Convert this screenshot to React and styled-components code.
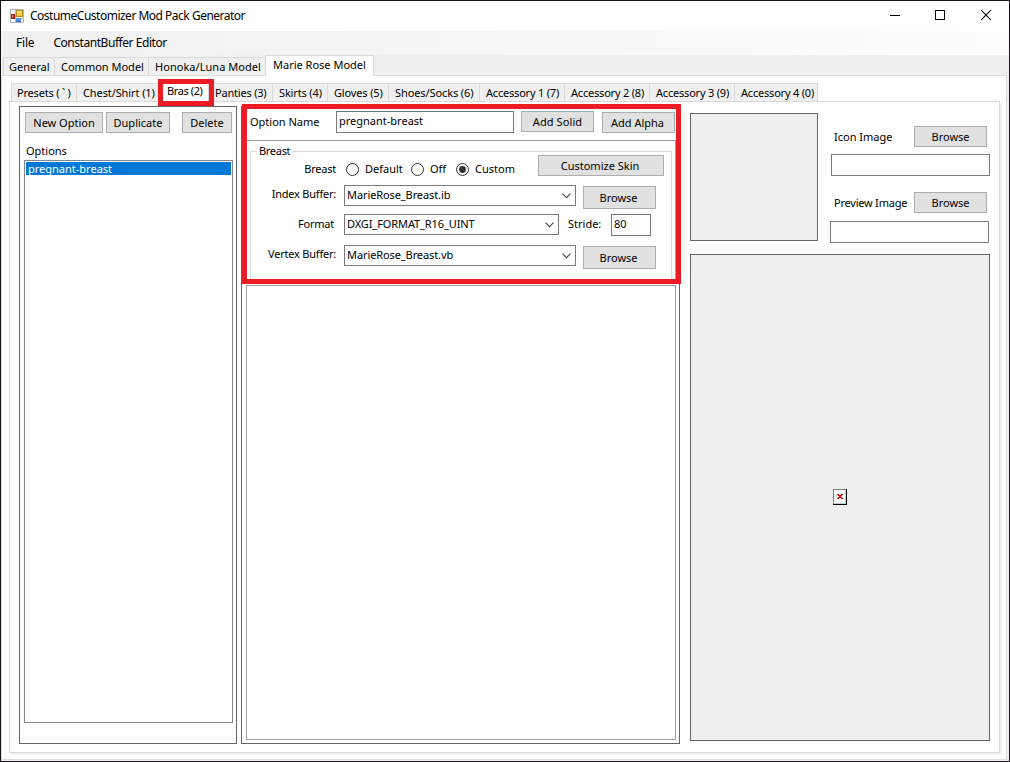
import { useState } from "react";
import styled, { createGlobalStyle, css } from "styled-components";

const outerTabs = [
  { title: "General", width: 51 },
  { title: "Common Model", width: 94 },
  { title: "Honoka/Luna Model", width: 118, spacing: "0.04px" },
  { title: "Marie Rose Model", width: 109, selected: true },
];

const innerTabs = [
  { title: "Presets ( ` )", width: 65, spacing: "-0.2px" },
  { title: "Chest/Shirt (1)", width: 84, spacing: "-0.1px" },
  { title: "Bras (2)", width: 48, spacing: "-0.4px", selected: true },
  { title: "Panties (3)", width: 64, spacing: "-0.2px" },
  { title: "Skirts (4)", width: 55, spacing: "-0.15px" },
  { title: "Gloves (5)", width: 61, spacing: "-0.15px" },
  { title: "Shoes/Socks (6)", width: 91, spacing: "-0.1px" },
  { title: "Accessory 1 (7)", width: 85, spacing: "-0.2px" },
  { title: "Accessory 2 (8)", width: 85, spacing: "-0.2px" },
  { title: "Accessory 3 (9)", width: 85, spacing: "-0.2px" },
  { title: "Accessory 4 (0)", width: 84, spacing: "-0.2px" },
];

const ComboBox = ({ width, value }) => (
  <ComboStyle $width={width}>
    <ComboText>{value}</ComboText>
    <svg width="9" height="6" viewBox="0 0 9 6">
      <path d="M0.5 0.7 L4.5 4.7 L8.5 0.7" fill="none" stroke="#444" strokeWidth="1.1" />
    </svg>
  </ComboStyle>
);

const RadioButton = ({ title, width, checked, onChange }) => (
  <RadioStyle $width={width} onClick={onChange}>
    <svg width="13" height="13" viewBox="0 0 13 13">
      <circle cx="6.5" cy="6.5" r="6" fill="#fff" stroke="#333" />
      {checked && <circle cx="6.5" cy="6.5" r="3.4" fill="#333" />}
    </svg>
    {title}
  </RadioStyle>
);

const AppIcon = () => (
  <svg width="14" height="14" viewBox="0 0 14 14" shapeRendering="crispEdges">
    <rect x="0.5" y="0.5" width="13" height="13" fill="#fff" stroke="#b4b8bc" />
    <path d="M5.5 0V14 M0 9.5H14" stroke="#b4b8bc" />
    <rect x="1" y="5" width="4" height="5" fill="#c33" />
    <rect x="1.5" y="5.5" width="3" height="4" fill="none" stroke="#a31c1c" />
    <rect x="2" y="6" width="1" height="2" fill="#ef8d80" />
    <rect x="6.5" y="1.5" width="6" height="6" fill="#fbc935" stroke="#b98a1c" />
    <rect x="7" y="2" width="4" height="2" fill="#fde48d" />
    <rect x="6" y="9" width="5" height="4" fill="#5795e8" />
    <rect x="6" y="12" width="5" height="1" fill="#2f67bd" />
  </svg>
);

export default function App() {
  const [skin, setSkin] = useState("Custom");

  return (
    <Window>
      <GlobalStyle />
      <TitleBar>
        <AppIcon />
        <WindowTitle>CostumeCustomizer Mod Pack Generator</WindowTitle>
        <svg width="102" height="12" viewBox="0 0 102 12">
          <path d="M0 5.5H10" stroke="#000" shapeRendering="crispEdges" />
          <rect x="45.5" y="0.5" width="9" height="9" fill="none" stroke="#000" shapeRendering="crispEdges" />
          <path d="M91.2 0.2L100.8 9.8M100.8 0.2L91.2 9.8" stroke="#000" strokeWidth="1.1" />
        </svg>
      </TitleBar>
      <MenuBar>
        <FileMenu>File</FileMenu>
        <span>ConstantBuffer Editor</span>
      </MenuBar>

      <OuterStrip>
        {outerTabs.map((tab) => (
          <OuterTab
            key={tab.title}
            $width={tab.width}
            $spacing={tab.spacing}
            $selected={tab.selected}
          >
            {tab.title}
          </OuterTab>
        ))}
      </OuterStrip>
      <OuterPage>
        <InnerStrip>
          {innerTabs.map((tab) => (
            <InnerTab
              key={tab.title}
              $width={tab.width}
              $spacing={tab.spacing}
              $selected={tab.selected}
            >
              {tab.title}
              {tab.selected && <TabHighlight />}
            </InnerTab>
          ))}
        </InnerStrip>
        <InnerPage>
          <OptionsPanel>
            <OptionButtons>
              <Button $width={78}>New Option</Button>
              <Button $width={64}>Duplicate</Button>
              <DeleteButton $width={50}>Delete</DeleteButton>
            </OptionButtons>
            <OptionsTitle>Options</OptionsTitle>
            <OptionsList>
              <OptionItem>pregnant-breast</OptionItem>
            </OptionsList>
          </OptionsPanel>

          <EditorPanel>
            <EditorHeader>
              <NameLabel>Option Name</NameLabel>
              <NameBox $width={178}>pregnant-breast</NameBox>
              <SolidButton $width={73}>Add Solid</SolidButton>
              <AlphaButton $width={73}>Add Alpha</AlphaButton>
            </EditorHeader>
            <TopPane>
              <GroupBox>
                <Legend>Breast</Legend>
                <FormRow $height={30}>
                  <RadioLabel>Breast</RadioLabel>
                  <RadioGroup>
                    {[["Default", 65], ["Off", 45], ["Custom", 82]].map(([title, width]) => (
                      <RadioButton
                        key={title}
                        title={title}
                        width={width}
                        checked={skin === title}
                        onChange={() => setSkin(title)}
                      />
                    ))}
                  </RadioGroup>
                  <SkinButton $width={126}>Customize Skin</SkinButton>
                </FormRow>
                <FormRow $height={29}>
                  <FieldLabel>Index Buffer:</FieldLabel>
                  <ComboBox width={232} value="MarieRose_Breast.ib" />
                  <FileButton $width={73}>Browse</FileButton>
                </FormRow>
                <FormRow $height={31}>
                  <FormatLabel>Format</FormatLabel>
                  <ComboBox width={215} value="DXGI_FORMAT_R16_UINT" />
                  <StrideLabel>Stride:</StrideLabel>
                  <NameBox $width={40}>80</NameBox>
                </FormRow>
                <FormRow $height={29}>
                  <FieldLabel>Vertex Buffer:</FieldLabel>
                  <ComboBox width={232} value="MarieRose_Breast.vb" />
                  <FileButton $width={73}>Browse</FileButton>
                </FormRow>
              </GroupBox>
            </TopPane>
            <BottomPane />
            <EditorHighlight />
          </EditorPanel>

          <ImagesPanel>
            <ImagesTop>
              <IconBox />
              <ImageFields>
                <ImageRow>
                  <span>Icon Image</span>
                  <Button $width={73}>Browse</Button>
                </ImageRow>
                <IconPath $width={159} />
                <ImageRow>
                  <PreviewLabel>Preview Image</PreviewLabel>
                  <Button $width={73}>Browse</Button>
                </ImageRow>
                <PreviewPath $width={159} />
              </ImageFields>
            </ImagesTop>
            <PreviewBox>
              <svg width="14" height="16" viewBox="0 0 14 16" shapeRendering="crispEdges">
                <rect width="14" height="16" fill="#000" />
                <rect width="13" height="15" fill="#808080" />
                <rect x="1" y="1" width="12" height="14" fill="#c8c8c8" />
                <rect x="1" y="1" width="11" height="13" fill="#fff" />
                <path
                  d="M4 5h2v1h2v-1h2v1h-1v1h-1v1h1v1h1v1h-2v-1h-2v1h-2v-1h1v-1h1v-1h-1v-1h-1z"
                  fill="#f00000"
                />
              </svg>
            </PreviewBox>
          </ImagesPanel>
        </InnerPage>
      </OuterPage>
    </Window>
  );
}

const GlobalStyle = createGlobalStyle`
  * {
    box-sizing: border-box;
  }
  body {
    margin: 0;
  }
`;

const Window = styled.div`
  display: flex;
  flex-direction: column;
  width: 1010px;
  height: 762px;
  border: 1px solid #16121a;
  background: #f0f0f0;
  color: #000;
  font: 11px/16px "Noto Sans", sans-serif;
  white-space: nowrap;
  overflow: hidden;
  cursor: default;

  svg {
    display: block;
    flex: none;
  }
`;

const TitleBar = styled.div`
  display: flex;
  align-items: center;
  height: 30px;
  padding: 0 17px 0 9px;
  background: #fff;
`;

const WindowTitle = styled.div`
  flex: 1;
  margin-left: 6px;
  font-size: 12px;
  letter-spacing: -0.5px;
`;

const MenuBar = styled.div`
  display: flex;
  align-items: center;
  gap: 19px;
  height: 24px;
  padding-left: 15px;
  background: linear-gradient(90deg, #f0f0f0, #fdfdfd);
  font-size: 12px;
  letter-spacing: -0.45px;
`;

const FileMenu = styled.span`
  letter-spacing: -0.2px;
`;

const OuterStrip = styled.div`
  display: flex;
  align-items: flex-end;
  flex: none;
  height: 20px;
  padding-left: 2px;
`;

const tabStyle = css`
  flex: none;
  width: ${({ $width }) => $width}px;
  height: 18px;
  padding: 1px 0 0 6px;
  border: 1px solid #d9d9d9;
  border-width: 1px 0 0 1px;
  background: #f0f0f0;
  letter-spacing: ${({ $spacing }) => $spacing || "0"};
  &:first-child {
    padding-left: 5px;
  }
`;

const OuterTab = styled.div`
  ${tabStyle}
  ${({ $selected }) =>
    $selected &&
    css`
      z-index: 1;
      height: 21px;
      margin: 0 0 -1px -1px;
      padding-left: 7px;
      border-right-width: 1px;
      background: #fff;
    `}
`;

const OuterPage = styled.div`
  flex: none;
  width: 1006px;
  height: 685px;
  padding: 7px 0 0 7px;
  border: 1px solid #dcdcdc;
  background: #fff;
`;

const InnerStrip = styled.div`
  display: flex;
  height: 18px;
  padding-left: 2px;
`;

const InnerTab = styled.div`
  ${tabStyle}
  position: relative;
  &:last-child {
    border-right-width: 1px;
  }
  ${({ $selected }) =>
    $selected &&
    css`
      z-index: 1;
      padding-top: 0;
      border-color: #fff;
      background: #fff;
      line-height: 14px;
    `}
`;

/* marker frames drawn over the form */
const TabHighlight = styled.div`
  position: absolute;
  left: -3px;
  top: -5px;
  width: 56px;
  height: 27px;
  border: 5px solid #ed1c24;
`;

const EditorHighlight = styled.div`
  position: absolute;
  left: 0;
  top: -3px;
  width: 439px;
  height: 180px;
  border: 5px solid #ed1c24;
`;

const InnerPage = styled.div`
  display: flex;
  width: 991px;
  height: 652px;
  padding: 4px 0 0 9px;
  border: 1px solid #d9d9d9;
  box-shadow: 2px 2px 0 #f0f0f0;
`;

const Button = styled.button`
  flex: none;
  width: ${({ $width }) => $width}px;
  height: 21px;
  padding: 1px 0 0;
  border: 1px solid #adadad;
  background: #e1e1e1;
  color: #000;
  font: inherit;
`;

const DeleteButton = styled(Button)`
  margin-left: 9px;
`;

const SolidButton = styled(Button)`
  margin-left: 7px;
  letter-spacing: 0.1px;
`;

const AlphaButton = styled(Button)`
  margin: 1px 0 0 8px;
  padding-right: 2px;
`;

const SkinButton = styled(Button)`
  padding-right: 2px;
`;

const FileButton = styled(Button)`
  height: 23px;
  margin: 1px 0 0 7px;
  padding-right: 2px;
`;

const TextBox = styled.div`
  flex: none;
  width: ${({ $width }) => $width}px;
  height: 22px;
  padding: 2px 0 0 2px;
  border: 1px solid #7a7a7a;
  background: #fff;
`;

const NameBox = styled(TextBox)`
  padding-top: 1px;
`;

const OptionsPanel = styled.div`
  flex: none;
  width: 218px;
  height: 638px;
  padding: 5px 0 0 4px;
  border: 1px solid #646464;
`;

const OptionButtons = styled.div`
  display: flex;
  gap: 3px;
  padding-left: 1px;
`;

const OptionsTitle = styled.div`
  height: 17px;
  margin-top: 10px;
  padding-left: 2px;
`;

const OptionsList = styled.div`
  width: 209px;
  height: 563px;
  padding: 1px;
  border: 1px solid #828790;
`;

const OptionItem = styled.div`
  height: 13px;
  padding-left: 2px;
  background: #0078d7;
  color: #fff;
  line-height: 14px;
`;

const EditorPanel = styled.div`
  position: relative;
  flex: none;
  width: 439px;
  height: 638px;
  margin-left: 4px;
  padding-left: 4px;
  border: 1px solid #646464;
`;

const EditorHeader = styled.div`
  display: flex;
  align-items: flex-start;
  height: 33px;
  padding: 4px 0 0 4px;
`;

const NameLabel = styled.div`
  width: 86px;
  padding-top: 3px;
`;

const TopPane = styled.div`
  width: 430px;
  height: 143px;
  padding: 10px 0 0 3px;
  border: 1px solid #a0a0a0;
`;

const BottomPane = styled.div`
  width: 430px;
  height: 455px;
  margin-top: 2px;
  border: 1px solid #a0a0a0;
`;

const GroupBox = styled.div`
  width: 422px;
  height: 130px;
  border: 1px solid #dcdcdc;
`;

const Legend = styled.div`
  width: max-content;
  height: 16px;
  margin: -9px 0 -4px 6px;
  padding: 0 2px;
  background: #fff;
  letter-spacing: -0.3px;
`;

const FormRow = styled.div`
  display: flex;
  align-items: flex-start;
  height: ${({ $height }) => $height}px;
`;

const FieldLabel = styled.div`
  width: 93px;
  padding: 1px 8px 0 0;
  text-align: right;
  letter-spacing: -0.22px;
`;

const RadioLabel = styled(FieldLabel)`
  width: 95px;
  padding: 6px 10px 0 0;
`;

const FormatLabel = styled(FieldLabel)`
  padding: 2px 10px 0 0;
`;

const StrideLabel = styled.div`
  width: 52px;
  padding: 2px 0 0 9px;
`;

const RadioGroup = styled.div`
  display: flex;
  padding-top: 6px;
`;

const RadioStyle = styled.div`
  display: flex;
  align-items: center;
  gap: 6px;
  width: ${({ $width }) => $width}px;
`;

const ComboStyle = styled.div`
  display: flex;
  justify-content: space-between;
  align-items: center;
  flex: none;
  width: ${({ $width }) => $width}px;
  height: 21px;
  padding: 0 4px 0 2px;
  border: 1px solid #7a7a7a;
  background: #fff;
`;

const ComboText = styled.div`
  padding-bottom: 1px;
  letter-spacing: -0.1px;
`;

const ImagesPanel = styled.div`
  width: 300px;
  margin: 7px 0 0 10px;
`;

const ImagesTop = styled.div`
  display: flex;
  height: 141px;
`;

const IconBox = styled.div`
  width: 128px;
  height: 128px;
  border: 1px solid #646464;
  background: #efefef;
`;

const ImageFields = styled.div`
  flex: none;
  padding: 13px 0 0 12px;
`;

const ImageRow = styled.div`
  display: flex;
  justify-content: space-between;
  align-items: center;
  width: 157px;
  padding-left: 4px;
`;

const PreviewLabel = styled.span`
  letter-spacing: -0.22px;
`;

const IconPath = styled(TextBox)`
  margin: 7px 0 16px 1px;
`;

const PreviewPath = styled(TextBox)`
  margin-top: 8px;
`;

const PreviewBox = styled.div`
  display: flex;
  justify-content: center;
  align-items: center;
  width: 300px;
  height: 487px;
  padding-bottom: 1px;
  border: 1px solid #646464;
  background: #efefef;
`;
